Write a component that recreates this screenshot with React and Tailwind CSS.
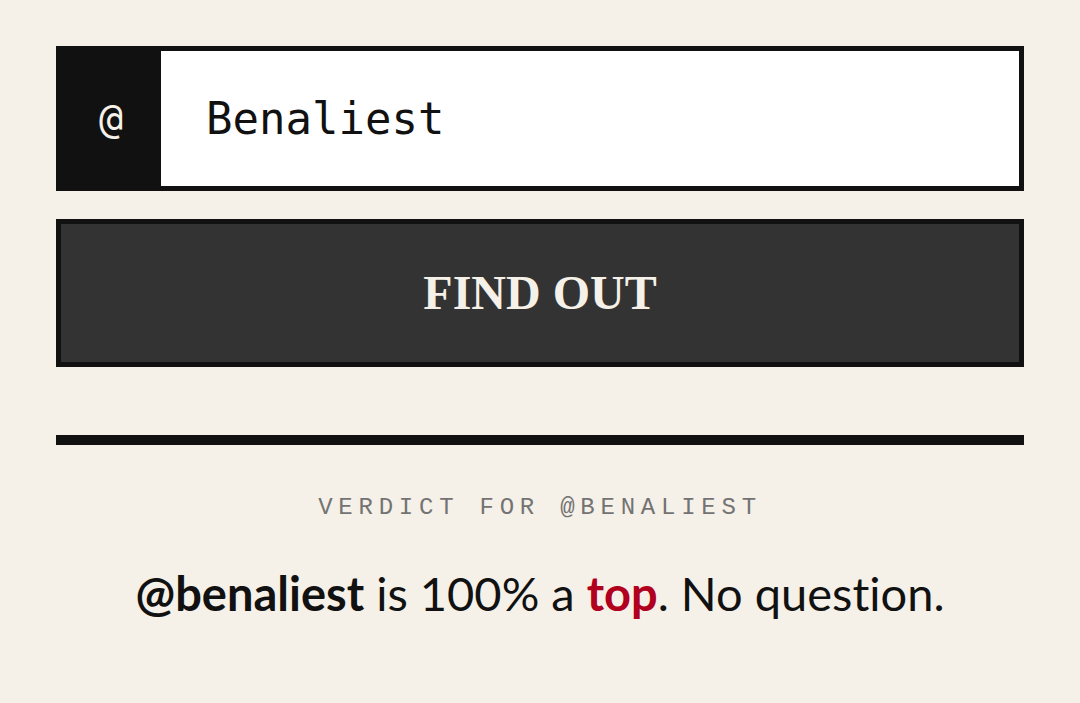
import { useState } from 'react'

export default function App() {
  const [handle, setHandle] = useState('Benaliest')
  const slug = handle.toLowerCase()

  return (
    <div className="min-h-[703px] bg-[#f5f0e8] px-[56px] pt-[46px]">
      {/* Handle input */}
      <div className="flex h-[145px] border-[5px] border-[#111111] bg-white">
        <div className="flex w-[100px] items-center justify-center bg-[#111111] text-[40px] text-[#f5f0e8] font-['DejaVu_Sans_Mono',monospace]">
          @
        </div>
        <input
          value={handle}
          onChange={e => setHandle(e.target.value)}
          className="flex-1 bg-white pl-[45px] text-[44px] text-[#111111] outline-none font-['DejaVu_Sans_Mono',monospace]"
        />
      </div>

      {/* Submit */}
      <button className="mt-[28px] flex h-[148px] w-full items-center justify-center border-[5px] border-[#111111] bg-[#333333] text-[48px] font-bold text-[#f5f0e8] font-['Liberation_Serif',serif]">
        FIND OUT
      </button>

      <div className="mt-[68px] h-[10px] bg-[#111111]" />

      {/* Verdict */}
      <p className="mt-[45px] text-center text-[24px] uppercase tracking-[0.24em] text-[#737373] font-['Liberation_Mono',monospace]">
        Verdict for @{slug}
      </p>
      <p className="mt-[32px] text-center text-[47px] text-[#111111] [font-variant-ligatures:none] font-['Lato',sans-serif]">
        <span className="font-bold">@{slug}</span> is 100% a{' '}
        <span className="font-bold text-[#b0001e]">top</span>. No question.
      </p>
    </div>
  )
}
